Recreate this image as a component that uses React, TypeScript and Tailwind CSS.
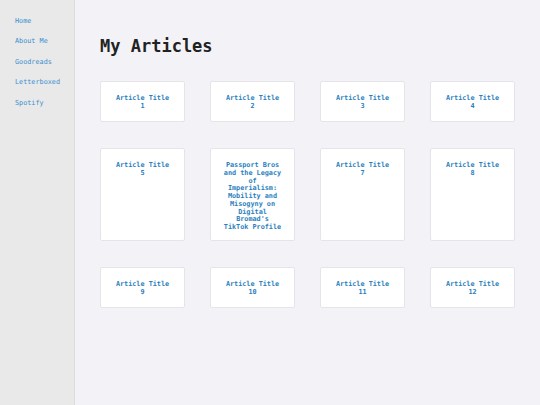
const links = ['Home', 'About Me', 'Goodreads', 'Letterboxed', 'Spotify'];

const articles = [
  'Article Title 1',
  'Article Title 2',
  'Article Title 3',
  'Article Title 4',
  'Article Title 5',
  "Passport Bros and the Legacy of Imperialism: Mobility and Misogyny on Digital Bromad's TikTok Profile",
  'Article Title 7',
  'Article Title 8',
  'Article Title 9',
  'Article Title 10',
  'Article Title 11',
  'Article Title 12',
];

export default function App() {
  return (
    <div
      className="flex min-h-[405px] w-full bg-[#f3f3f7]"
      style={{ fontFamily: '"DejaVu Sans Mono", "Liberation Mono", monospace' }}
    >
      <nav className="flex w-[75px] shrink-0 flex-col gap-[11.5px] border-r border-[#dcdcdc] bg-[#e9e9e9] pl-[15px] pt-[16.5px]">
        {links.map((link) => (
          <a key={link} href="#" className="text-[6.8px] leading-[9px] text-[#3b8fcf]">
            {link}
          </a>
        ))}
      </nav>

      <main className="flex-1 pl-[25px] pr-[25px] pt-[35px]">
        <h1 className="text-[17px] font-bold leading-[22px] text-[#222]">My Articles</h1>

        <div className="mt-[24px] grid grid-cols-[repeat(4,85px)] gap-x-[25px] gap-y-[26px]">
          {articles.map((title, i) => (
            <div
              key={i}
              className="min-h-[41px] rounded-[2px] border border-[#e4e4ea] bg-white px-[12px] pt-[13px] pb-[8px] text-center"
            >
              <span className="block text-[6.8px] font-bold leading-[7.75px] text-[#2a7fbd]">
                {title}
              </span>
            </div>
          ))}
        </div>
      </main>
    </div>
  );
}
